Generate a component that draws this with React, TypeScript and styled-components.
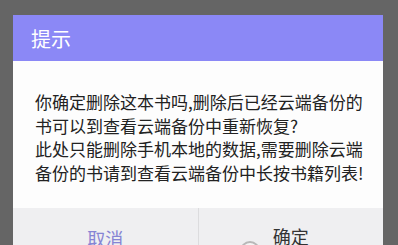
import styled, {createGlobalStyle} from "styled-components";

const GlobalStyle = createGlobalStyle`
  html, body {
    margin: 0;
    padding: 0;
    background: #656565;
    font-family: "Noto Sans CJK SC", "Noto Sans", sans-serif;
  }
`;

const Screen = styled.div`
  width: 398px;
  height: 245px;
  overflow: hidden;
  padding: 15px 15px 0 13px;
  box-sizing: border-box;
`;

const Dialog = styled.div`
  width: 370px;
  background: #fdfdfd;
  display: flex;
  flex-direction: column;
`;

const Header = styled.div`
  height: 46px;
  background: #8b88f6;
  color: #fff;
  font-size: 20px;
  display: flex;
  align-items: center;
  padding-left: 18px;
`;

const Message = styled.div`
  padding: 29px 10px 24px 22px;
  font-size: 17px;
  line-height: 23.5px;
  color: #222;
  white-space: pre-line;
`;

const ButtonRow = styled.div`
  display: flex;
  background: #efeff1;
  height: 70px;
`;

const Button = styled.div<{$primary?: boolean; $first?: boolean}>`
  flex: 1;
  position: relative;
  display: flex;
  justify-content: center;
  align-items: flex-start;
  padding-top: ${(p) => (p.$primary ? "16px" : "18px")};
  font-size: 18px;
  line-height: 24px;
  color: ${(p) => (p.$primary ? "#333" : "#8684d4")};
  border-right: ${(p) => (p.$first ? "1px solid #dcdcde" : "none")};
`;

const Spinner = styled.svg`
  position: absolute;
  left: 40px;
  top: 32px;
`;

export default function App() {
  return (
    <>
      <GlobalStyle />
      <Screen>
        <Dialog>
          <Header>提示</Header>
          <Message>
            {"你确定删除这本书吗,删除后已经云端备份的\n书可以到查看云端备份中重新恢复?\n此处只能删除手机本地的数据,需要删除云端\n备份的书请到查看云端备份中长按书籍列表!"}
          </Message>
          <ButtonRow>
            <Button $first>取消</Button>
            <Button $primary>
              确定
              <Spinner width="22" height="22" viewBox="0 0 22 22">
                <circle cx="11" cy="11" r="9" fill="#f4f4f4" stroke="#b8b8b8" strokeWidth="2" />
              </Spinner>
            </Button>
          </ButtonRow>
        </Dialog>
      </Screen>
    </>
  );
}
